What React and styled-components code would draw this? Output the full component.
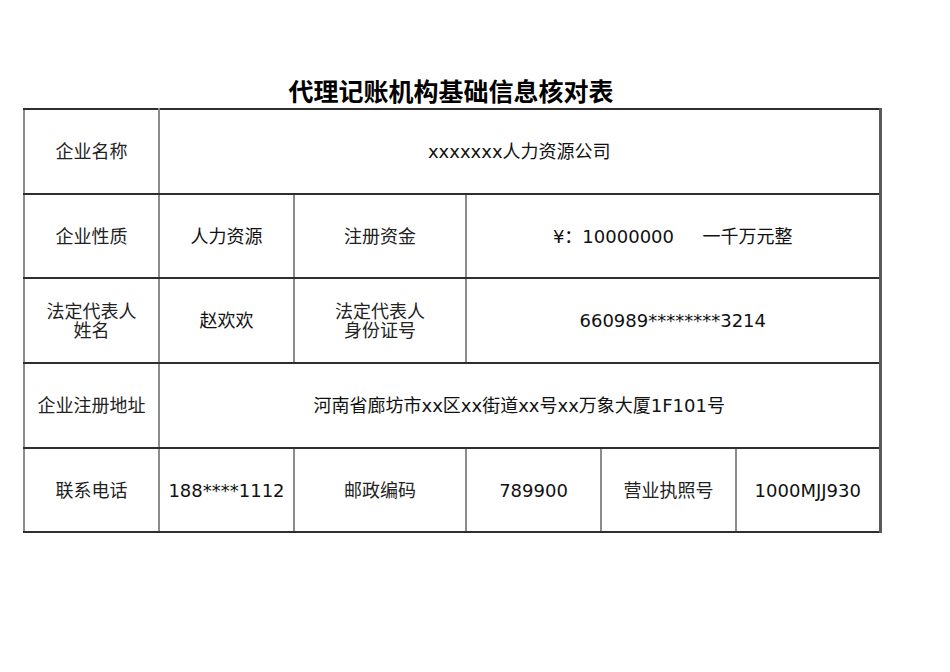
import React from "react";
import styled, { createGlobalStyle } from "styled-components";

const GlobalStyle = createGlobalStyle`
  html, body {
    margin: 0;
    padding: 0;
    background: #fff;
  }
  body {
    font-family: "DejaVu Sans", "Noto Sans CJK SC", sans-serif;
    color: #111;
  }
`;

const Page = styled.div`
  width: 950px;
  height: 672px;
  padding-top: 76px;
  box-sizing: border-box;
`;

const Sheet = styled.div`
  width: 856px;
  margin-left: 23px;
`;

const Title = styled.h1`
  margin: 0;
  height: 32px;
  line-height: 34px;
  text-align: center;
  font-family: "DejaVu Sans", "Noto Sans CJK SC", sans-serif;
  font-size: 25px;
  font-weight: 700;
  color: #000;
`;

const Table = styled.table`
  width: 856px;
  border-collapse: collapse;
  table-layout: fixed;
  border-top: 2px solid #8c8c8c;
  border-left: 2px solid #6e6e6e;
  border-right: 3px solid #5a5a5a;
  border-bottom: 2px solid #333;
`;

const Row = styled.tr`
  height: 84.7px;
`;

const Cell = styled.td`
  padding: 0 4px;
  text-align: center;
  vertical-align: middle;
  font-size: 18px;
  line-height: 19px;
  color: ${(p) => (p.$label ? "#222" : "#111")};
  border-top: 2px solid #2e2e2e;
  border-bottom: 2px solid #2e2e2e;
  border-left: 2px solid #8c8c8c;
  border-right: 2px solid #8c8c8c;
  white-space: ${(p) => (p.$pre ? "pre" : "normal")};
`;

const cols = [135, 135, 172, 135, 135, 144];

export default function App() {
  return (
    <>
      <GlobalStyle />
      <Page>
        <Sheet>
          <Title>代理记账机构基础信息核对表</Title>
          <Table>
            <colgroup>
              {cols.map((w, i) => (
                <col key={i} style={{ width: w }} />
              ))}
            </colgroup>
            <tbody>
              <Row>
                <Cell $label>企业名称</Cell>
                <Cell colSpan={5}>xxxxxxx人力资源公司</Cell>
              </Row>
              <Row>
                <Cell $label>企业性质</Cell>
                <Cell>人力资源</Cell>
                <Cell $label>注册资金</Cell>
                <Cell colSpan={3} $pre>
                  {"¥：10000000     一千万元整"}
                </Cell>
              </Row>
              <Row>
                <Cell $label>
                  法定代表人
                  <br />
                  姓名
                </Cell>
                <Cell>赵欢欢</Cell>
                <Cell $label>
                  法定代表人
                  <br />
                  身份证号
                </Cell>
                <Cell colSpan={3}>660989********3214</Cell>
              </Row>
              <Row>
                <Cell $label>企业注册地址</Cell>
                <Cell colSpan={5}>河南省廊坊市xx区xx街道xx号xx万象大厦1F101号</Cell>
              </Row>
              <Row>
                <Cell $label>联系电话</Cell>
                <Cell>188****1112</Cell>
                <Cell $label>邮政编码</Cell>
                <Cell>789900</Cell>
                <Cell $label>营业执照号</Cell>
                <Cell>1000MJJ930</Cell>
              </Row>
            </tbody>
          </Table>
        </Sheet>
      </Page>
    </>
  );
}
